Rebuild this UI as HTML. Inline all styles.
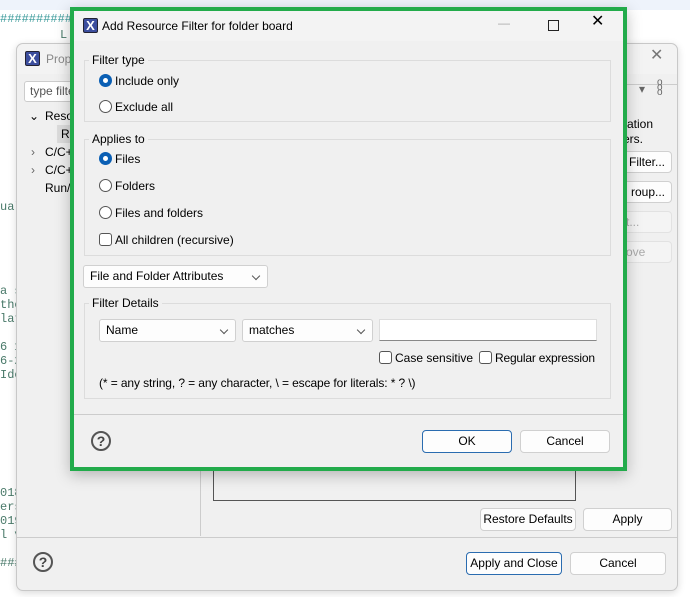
<!DOCTYPE html>
<html><head><meta charset="utf-8"><style>
*{box-sizing:border-box;margin:0;padding:0}
body{width:690px;height:597px;overflow:hidden;background:#fff;font-family:"Segoe UI","Liberation Sans",sans-serif;font-size:12px;color:#000;position:relative}
.a{position:absolute}
.mono{font-family:"Liberation Mono",monospace;font-size:12px;color:#4a7a6a;white-space:pre}
.btn{position:absolute;background:#fdfdfd;border:1px solid #d0d0d0;border-radius:4px;text-align:center;line-height:20px;font-size:12px}
.grp{position:absolute;border:1px solid #dcdcdc}
.lbl{position:absolute;background:#f0f0f0;padding:0 3px;font-size:12px;line-height:14px}
.rad{position:absolute;width:13px;height:13px;border:1px solid #555;border-radius:50%;background:#fff}
.rad.on{border:none;background:#0a5fb4}
.rad.on:after{content:"";position:absolute;left:4px;top:4px;width:5px;height:5px;border-radius:50%;background:#fff}
.chk{position:absolute;width:13px;height:13px;border:1px solid #555;border-radius:3px;background:#fff}
.t{position:absolute;font-size:12px;line-height:14px;white-space:nowrap}
.cmb{position:absolute;background:#fdfdfd;border:1px solid #d0d0d0;border-radius:3px;height:23px;line-height:21px;padding-left:6px;font-size:12px}
.cmb:after{content:"";position:absolute;right:8px;top:7px;width:5px;height:5px;border-right:1px solid #555;border-bottom:1px solid #555;transform:rotate(45deg)}
.help{position:absolute;width:20px;height:20px;border:2px solid #555;border-radius:50%;text-align:center;font-weight:bold;font-size:14px;line-height:16px;color:#444}
.xi{position:absolute;width:15px;height:15px;background:#3c4e9e;border:1px solid #223;border-radius:2px;color:#fff;font-size:13px;line-height:13px;text-align:center;font-weight:bold}
</style></head><body>
<div class="a" style="left:0;top:0;width:690px;height:10px;background:#eef3fb"></div>
<div class="a mono" style="left:0;top:12px;color:#3a9a9a">##########</div>
<div class="a mono" style="left:60px;top:28px">L</div>
<div class="a mono" style="left:0;top:200px">ual</div>
<div class="a mono" style="left:0;top:284px">a s
the
lat

6 1
6-2
Ide</div>
<div class="a mono" style="left:0;top:486px">018
ers
019
l v

###</div>

<!-- back dialog -->
<div class="a" style="left:16px;top:43px;width:662px;height:548px;background:#f0f0f0;border:1px solid #c8c8c8;border-radius:7px;box-shadow:0 2px 8px rgba(0,0,0,.15)">
 <div class="a" style="left:0;top:0;width:660px;height:30px;background:#f3f3f3;border-radius:7px 7px 0 0"></div>
 <div class="xi" style="left:8px;top:7px">X</div>
 <div class="t" style="left:29px;top:8px;color:#888;font-size:12px">Properties</div>
 <div class="t" style="left:633px;top:5px;font-size:16px;color:#777">✕</div>
 <div class="a" style="left:7px;top:37px;width:60px;height:21px;background:#fff;border:1px solid #ccc;border-radius:3px;padding-left:5px;line-height:19px;color:#555">type filter</div>
 <div class="t" style="left:12px;top:65px">⌄</div>
 <div class="t" style="left:28px;top:65px">Resource</div>
 <div class="a" style="left:40px;top:81px;width:20px;height:18px;background:#dcdcdc"></div>
 <div class="t" style="left:44px;top:83px">Re</div>
 <div class="t" style="left:14px;top:101px;color:#666">›</div><div class="t" style="left:28px;top:101px">C/C++</div>
 <div class="t" style="left:14px;top:119px;color:#666">›</div><div class="t" style="left:28px;top:119px">C/C++</div>
 <div class="t" style="left:28px;top:137px">Run/</div>
 <div class="a" style="left:183px;top:40px;width:1px;height:452px;background:#ccc"></div>
 <div class="a" style="left:590px;top:40px;width:70px;height:1px;background:#ccc"></div>
 <div class="t" style="left:622px;top:38px;color:#666">▾</div>
 <div class="t" style="left:640px;top:36px;color:#666;font-size:10px;line-height:5px">o<br>o<br>o</div>
 <div class="t" style="left:606px;top:73px">ration</div>
 <div class="t" style="left:606px;top:88px">ers.</div>
 <div class="btn" style="left:590px;top:107px;width:65px;height:22px;text-align:right;padding-right:6px">Filter...</div>
 <div class="btn" style="left:590px;top:137px;width:65px;height:22px;text-align:right;padding-right:6px">roup...</div>
 <div class="btn" style="left:590px;top:167px;width:65px;height:22px;background:#f4f4f4;color:#aaa;border-color:#e2e2e2;text-align:left;padding-left:18px">t...</div>
 <div class="btn" style="left:590px;top:197px;width:65px;height:22px;background:#f4f4f4;color:#aaa;border-color:#e2e2e2;text-align:left;padding-left:18px">ove</div>
 <div class="a" style="left:196px;top:420px;width:363px;height:37px;border:1px solid #555;border-top:none"></div>
 <div class="btn" style="left:463px;top:464px;width:96px;height:23px">Restore Defaults</div>
 <div class="btn" style="left:566px;top:464px;width:89px;height:23px">Apply</div>
 <div class="a" style="left:0;top:493px;width:660px;height:1px;background:#ccc"></div>
 <div class="help" style="left:16px;top:508px">?</div>
 <div class="btn" style="left:449px;top:508px;width:96px;height:23px;border-color:#2a6cb0">Apply and Close</div>
 <div class="btn" style="left:553px;top:508px;width:96px;height:23px">Cancel</div>
</div>

<!-- front dialog -->
<div class="a" style="left:70px;top:7px;width:557px;height:464px;border:4px solid #22ab4b;background:#f0f0f0;box-shadow:0 4px 14px rgba(0,0,0,.25)">
 <div class="a" style="left:0;top:0;width:549px;height:30px;background:#f3f3f3"></div>
 <div class="xi" style="left:9px;top:7px">X</div>
 <div class="t" style="left:28px;top:8px">Add Resource Filter for folder board</div>
 <div class="t" style="left:424px;top:5px;color:#aaa">—</div>
 <div class="a" style="left:474px;top:9px;width:11px;height:11px;border:1px solid #222"></div>
 <div class="t" style="left:517px;top:4px;font-size:16px">✕</div>

 <div class="grp" style="left:10px;top:49px;width:527px;height:62px"></div>
 <div class="lbl" style="left:15px;top:42px">Filter type</div>
 <div class="rad on" style="left:25px;top:63px"></div><div class="t" style="left:41px;top:63px">Include only</div>
 <div class="rad" style="left:25px;top:89px"></div><div class="t" style="left:41px;top:89px">Exclude all</div>

 <div class="grp" style="left:10px;top:128px;width:527px;height:117px"></div>
 <div class="lbl" style="left:15px;top:121px">Applies to</div>
 <div class="rad on" style="left:25px;top:141px"></div><div class="t" style="left:41px;top:141px">Files</div>
 <div class="rad" style="left:25px;top:168px"></div><div class="t" style="left:41px;top:168px">Folders</div>
 <div class="rad" style="left:25px;top:195px"></div><div class="t" style="left:41px;top:195px">Files and folders</div>
 <div class="chk" style="left:25px;top:222px"></div><div class="t" style="left:41px;top:222px">All children (recursive)</div>

 <div class="cmb" style="left:9px;top:254px;width:185px">File and Folder Attributes</div>

 <div class="grp" style="left:10px;top:292px;width:527px;height:96px"></div>
 <div class="lbl" style="left:15px;top:285px">Filter Details</div>
 <div class="cmb" style="left:25px;top:308px;width:137px">Name</div>
 <div class="cmb" style="left:168px;top:308px;width:131px">matches</div>
 <div class="a" style="left:305px;top:308px;width:218px;height:22px;background:#fff;border:1px solid #ddd;border-bottom:1px solid #888"></div>
 <div class="chk" style="left:305px;top:340px"></div><div class="t" style="left:321px;top:340px">Case sensitive</div>
 <div class="chk" style="left:405px;top:340px"></div><div class="t" style="left:421px;top:340px;letter-spacing:-0.2px">Regular expression</div>
 <div class="t" style="left:25px;top:365px;letter-spacing:-0.1px">(* = any string, ? = any character, \ = escape for literals: * ? \)</div>

 <div class="a" style="left:0;top:403px;width:549px;height:1px;background:#ccc"></div>
 <div class="help" style="left:17px;top:420px">?</div>
 <div class="btn" style="left:348px;top:419px;width:90px;height:23px;border-color:#2a6cb0">OK</div>
 <div class="btn" style="left:446px;top:419px;width:90px;height:23px">Cancel</div>
</div>
</body></html>
